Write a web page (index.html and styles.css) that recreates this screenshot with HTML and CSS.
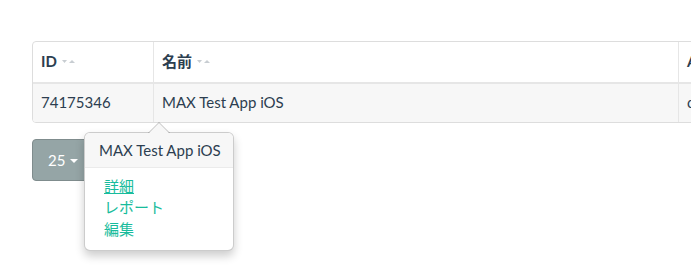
FILE: index.html
```html
<!DOCTYPE html>
<html lang="ja">
<head>
  <meta charset="UTF-8">
  <title>Apps</title>
  <link rel="stylesheet" href="styles.css">
</head>
<body>
  <main class="page">
    <div class="table-clip">
      <div class="table-wrap">
        <table class="apps-table">
          <thead>
            <tr>
              <th class="col-id">ID <span class="sort"><svg width="14" height="5" viewBox="0 0 14 5"><path d="M0 1h5L2.5 4z" fill="#c8cdd2"/><path d="M7 4h6L10 1z" fill="#c8cdd2"/></svg></span></th>
              <th class="col-name">名前 <span class="sort"><svg width="14" height="5" viewBox="0 0 14 5"><path d="M0 1h5L2.5 4z" fill="#c8cdd2"/><path d="M7 4h6L10 1z" fill="#c8cdd2"/></svg></span></th>
              <th class="col-more">A</th>
            </tr>
          </thead>
          <tbody>
            <tr>
              <td>74175346</td>
              <td class="name-cell">MAX Test App iOS</td>
              <td>c</td>
            </tr>
          </tbody>
        </table>
      </div>
    </div>

    <div class="pager">
      <button class="btn-size">25 <span class="caret"></span></button>
      <div class="popover">
        <div class="popover-arrow"></div>
        <h3 class="popover-title">MAX Test App iOS</h3>
        <ul class="popover-links">
          <li><a href="#" class="focus">詳細</a></li>
          <li><a href="#">レポート</a></li>
          <li><a href="#">編集</a></li>
        </ul>
      </div>
    </div>
  </main>
</body>
</html>
```

FILE: styles.css
```css
body {
  margin: 0;
  font-family: Lato, "Noto Sans CJK JP", sans-serif;
  font-size: 15px;
  line-height: 1.42857;
  color: #2c3e50;
  background: #fff;
}
.page {
  padding: 41px 0 0 32px;
}
.table-clip {
  width: 659px;
  overflow: hidden;
}
.table-wrap {
  width: 700px;
  border: 1px solid #dddddd;
  border-radius: 4px;
  overflow: hidden;
}
.apps-table {
  width: 100%;
  border-collapse: collapse;
}
.apps-table th {
  text-align: left;
  font-weight: bold;
  padding: 9px 8px 10px 8px;
  border-bottom: 2px solid #e6e6e6;
  border-right: 1px solid #e6e6e6;
}
.apps-table td {
  padding: 8px 8px 8px 8px;
  background: #f7f7f7;
  border-right: 1px solid #e6e6e6;
}
.col-id {
  width: 104px;
}
.col-name {
  width: 508px;
}
.sort svg {
  display: inline-block;
  margin-left: 1px;
  vertical-align: 3px;
}

/* Pager + popover */
.pager {
  position: relative;
  margin-top: 16px;
  height: 130px;
}
.btn-size {
  display: block;
  box-sizing: border-box;
  height: 42px;
  width: 90px;
  font-family: inherit;
  font-size: 15px;
  line-height: 20px;
  color: #fff;
  background: #95a5a6;
  border: 1px solid #7f8c8d;
  border-radius: 4px;
  padding: 10px 15px;
  text-align: left;
}
.caret {
  display: inline-block;
  width: 0;
  height: 0;
  margin-left: 1px;
  vertical-align: 3px;
  border-top: 4px solid #fff;
  border-left: 4px solid transparent;
  border-right: 4px solid transparent;
}
.popover {
  position: absolute;
  left: 52px;
  top: -7px;
  width: 150px;
  background: #fff;
  border: 1px solid rgba(0, 0, 0, 0.2);
  border-radius: 6px;
  box-shadow: 0 5px 10px rgba(0, 0, 0, 0.2);
  box-sizing: border-box;
}
.popover-arrow {
  position: absolute;
  top: -11px;
  left: 63px;
  width: 0;
  height: 0;
  border-left: 11px solid transparent;
  border-right: 11px solid transparent;
  border-bottom: 11px solid rgba(0, 0, 0, 0.25);
}
.popover-arrow::after {
  content: "";
  position: absolute;
  top: 1px;
  left: -10px;
  border-left: 10px solid transparent;
  border-right: 10px solid transparent;
  border-bottom: 10px solid #f7f7f7;
}
.popover-title {
  margin: 0;
  padding: 7px 14px;
  font-size: 15px;
  font-weight: normal;
  line-height: 20px;
  white-space: nowrap;
  background: #f7f7f7;
  border-bottom: 1px solid #ebebeb;
  border-radius: 5px 5px 0 0;
}
.popover-links {
  list-style: none;
  margin: 0;
  padding: 8px 14px 10px 19px;
}
.popover-links a {
  color: #18bc9c;
  text-decoration: none;
}
.popover-links a.focus {
  text-decoration: underline;
}
```
